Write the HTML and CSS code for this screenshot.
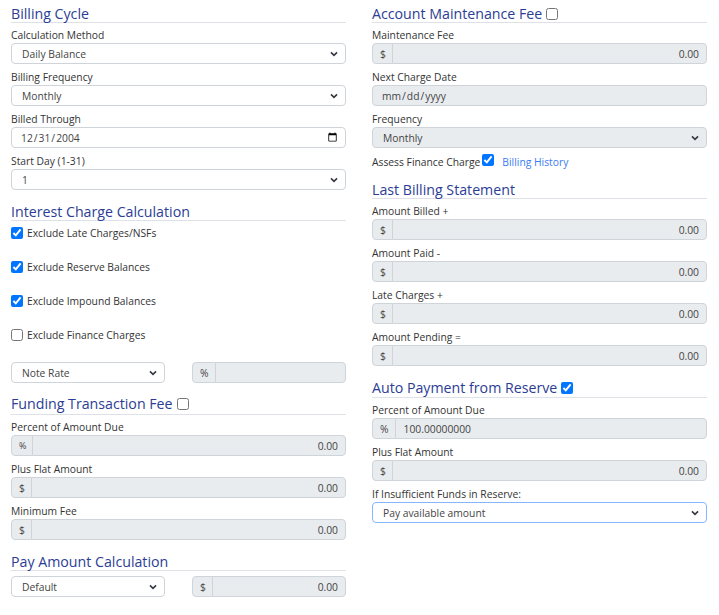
FILE: index.html
```html
<!DOCTYPE html>
<html lang="en">
<head>
<meta charset="utf-8">
<title>Billing</title>
<link rel="stylesheet" href="styles.css">
</head>
<body>
<div class="page">
  <div class="col">
    <section class="sec">
      <h2 class="sec-title">Billing Cycle</h2>
      <div class="field">
        <label>Calculation Method</label>
        <select class="ctl sel"><option>Daily Balance</option></select>
      </div>
      <div class="field">
        <label>Billing Frequency</label>
        <select class="ctl sel"><option>Monthly</option></select>
      </div>
      <div class="field">
        <label>Billed Through</label>
        <input class="ctl date" type="date" value="2004-12-31">
      </div>
      <div class="field">
        <label>Start Day (1-31)</label>
        <select class="ctl sel"><option>1</option></select>
      </div>
    </section>

    <section class="sec">
      <h2 class="sec-title spaced">Interest Charge Calculation</h2>
      <label class="check"><input type="checkbox" checked><span>Exclude Late Charges/NSFs</span></label>
      <label class="check"><input type="checkbox" checked><span>Exclude Reserve Balances</span></label>
      <label class="check"><input type="checkbox" checked><span>Exclude Impound Balances</span></label>
      <label class="check"><input type="checkbox"><span>Exclude Finance Charges</span></label>
      <div class="pair pair-rate">
        <select class="ctl sel"><option>Note Rate</option></select>
        <div class="group">
          <span class="addon">%</span>
          <input class="ctl grp-input" type="text" value="" disabled>
        </div>
      </div>
    </section>

    <section class="sec">
      <h2 class="sec-title spaced tall">Funding Transaction Fee<input type="checkbox" class="head-check"></h2>
      <div class="field">
        <label>Percent of Amount Due</label>
        <div class="group">
          <span class="addon pct">%</span>
          <input class="ctl grp-input num" type="text" value="0.00" disabled>
        </div>
      </div>
      <div class="field">
        <label>Plus Flat Amount</label>
        <div class="group">
          <span class="addon">$</span>
          <input class="ctl grp-input num" type="text" value="0.00" disabled>
        </div>
      </div>
      <div class="field">
        <label>Minimum Fee</label>
        <div class="group">
          <span class="addon">$</span>
          <input class="ctl grp-input num" type="text" value="0.00" disabled>
        </div>
      </div>
    </section>

    <section class="sec">
      <h2 class="sec-title spaced">Pay Amount Calculation</h2>
      <div class="pair">
        <select class="ctl sel"><option>Default</option></select>
        <div class="group">
          <span class="addon">$</span>
          <input class="ctl grp-input num" type="text" value="0.00" disabled>
        </div>
      </div>
    </section>
  </div>

  <div class="col">
    <section class="sec">
      <h2 class="sec-title">Account Maintenance Fee<input type="checkbox" class="head-check"></h2>
      <div class="field">
        <label>Maintenance Fee</label>
        <div class="group">
          <span class="addon">$</span>
          <input class="ctl grp-input num" type="text" value="0.00" disabled>
        </div>
      </div>
      <div class="field">
        <label>Next Charge Date</label>
        <input class="ctl date nodate" type="date" disabled>
      </div>
      <div class="field">
        <label>Frequency</label>
        <select class="ctl sel" disabled><option>Monthly</option></select>
      </div>
      <div class="assess">
        <span>Assess Finance Charge</span>
        <input type="checkbox" checked>
        <a class="link" href="#">Billing History</a>
      </div>
    </section>

    <section class="sec">
      <h2 class="sec-title spaced">Last Billing Statement</h2>
      <div class="field">
        <label>Amount Billed +</label>
        <div class="group">
          <span class="addon">$</span>
          <input class="ctl grp-input num" type="text" value="0.00" disabled>
        </div>
      </div>
      <div class="field">
        <label>Amount Paid -</label>
        <div class="group">
          <span class="addon">$</span>
          <input class="ctl grp-input num" type="text" value="0.00" disabled>
        </div>
      </div>
      <div class="field">
        <label>Late Charges +</label>
        <div class="group">
          <span class="addon">$</span>
          <input class="ctl grp-input num" type="text" value="0.00" disabled>
        </div>
      </div>
      <div class="field">
        <label>Amount Pending =</label>
        <div class="group">
          <span class="addon">$</span>
          <input class="ctl grp-input num" type="text" value="0.00" disabled>
        </div>
      </div>
    </section>

    <section class="sec">
      <h2 class="sec-title spaced tall1">Auto Payment from Reserve<input type="checkbox" class="head-check" checked></h2>
      <div class="field">
        <label>Percent of Amount Due</label>
        <div class="group">
          <span class="addon">%</span>
          <input class="ctl grp-input" type="text" value="100.00000000" disabled>
        </div>
      </div>
      <div class="field">
        <label>Plus Flat Amount</label>
        <div class="group">
          <span class="addon">$</span>
          <input class="ctl grp-input num" type="text" value="0.00" disabled>
        </div>
      </div>
      <div class="field">
        <label>If Insufficient Funds in Reserve:</label>
        <select class="ctl sel focus"><option>Pay available amount</option></select>
      </div>
    </section>
  </div>
</div>
</body>
</html>
```
FILE: styles.css
```css
* { box-sizing: border-box; }

body {
  margin: 0;
  font-family: "Open Sans", "Liberation Sans", sans-serif;
  color: #333;
  background: #fff;
}

.page {
  display: grid;
  grid-template-columns: 335px 335px;
  column-gap: 26px;
  padding: 5px 0 0 11px;
  align-items: start;
}

.col {
  display: flex;
  flex-direction: column;
}

.sec { display: flow-root; }

.sec-title {
  font-size: 14.2px;
  font-weight: 400;
  line-height: 17px;
  color: #2b3d94;
  margin: 0 0 5px;
  border-bottom: 1px solid #dee2e6;
  white-space: nowrap;
}

.sec-title.spaced { margin-top: 7px; }
.sec-title.tall { padding-bottom: 2px; }
.sec-title.tall1 { padding-bottom: 1px; }

.head-check {
  width: 12px;
  height: 12px;
  margin: 0 0 0 4px;
  vertical-align: -1px;
}

.field { margin-bottom: 6px; }

.field > label {
  display: block;
  font-size: 10.3px;
  line-height: 15px;
  color: #333;
}

.ctl {
  display: block;
  width: 100%;
  height: 21px;
  margin: 0;
  border: 1px solid #ced4da;
  border-radius: 4px;
  background-color: #fff;
  font-family: "Open Sans", "Liberation Sans", sans-serif;
  font-size: 10.3px;
  color: #444;
  padding: 0 10px;
  outline: none;
}

.ctl:disabled { background-color: #e9ecef; color: #444; opacity: 1; }

.sel {
  appearance: none;
  -webkit-appearance: none;
  background-image: url("data:image/svg+xml,%3Csvg xmlns='http://www.w3.org/2000/svg' viewBox='0 0 10 7'%3E%3Cpath d='M1.2 1.5 5 5.2 8.8 1.5' fill='none' stroke='%23343a40' stroke-width='2'/%3E%3C/svg%3E");
  background-repeat: no-repeat;
  background-position: right 7px center;
  background-size: 8px 6px;
  padding-right: 22px;
}

.sel.focus { border-color: #86b7fe; }

.date { padding: 0 7px 0 8px; }
.date::-webkit-calendar-picker-indicator { margin: 0; padding: 0; width: 11px; height: 11px; }
.nodate::-webkit-calendar-picker-indicator { display: none; }

.group { display: flex; width: 100%; }

.addon {
  display: flex;
  align-items: center;
  height: 21px;
  padding: 0 6px 0 7px;
  background: #e9ecef;
  border: 1px solid #ced4da;
  border-radius: 4px 0 0 4px;
  font-size: 10.3px;
  color: #444;
}

.addon.pct { font-size: 9px; }

.grp-input {
  flex: 1;
  min-width: 0;
  margin-left: -1px;
  border-radius: 0 4px 4px 0;
  padding: 0 7px 0 8px;
}

.num { text-align: right; }

.check {
  display: flex;
  align-items: center;
  height: 14px;
  margin-bottom: 20px;
  font-size: 10.3px;
  color: #333;
}

.check input {
  width: 12px;
  height: 12px;
  margin: 0 4px 0 0;
}

.pair {
  display: grid;
  grid-template-columns: 154px 154px;
  justify-content: space-between;
}

.pair-rate { margin-bottom: 5px; }

.assess {
  display: flex;
  align-items: center;
  height: 15px;
  margin-bottom: 5px;
  font-size: 10.3px;
  color: #333;
}

.assess input {
  width: 12px;
  height: 12px;
  margin: 0 0 0 2px;
  position: relative;
  top: -2px;
}

.link {
  margin-left: 8px;
  color: #3a7cf2;
  text-decoration: none;
}
```
